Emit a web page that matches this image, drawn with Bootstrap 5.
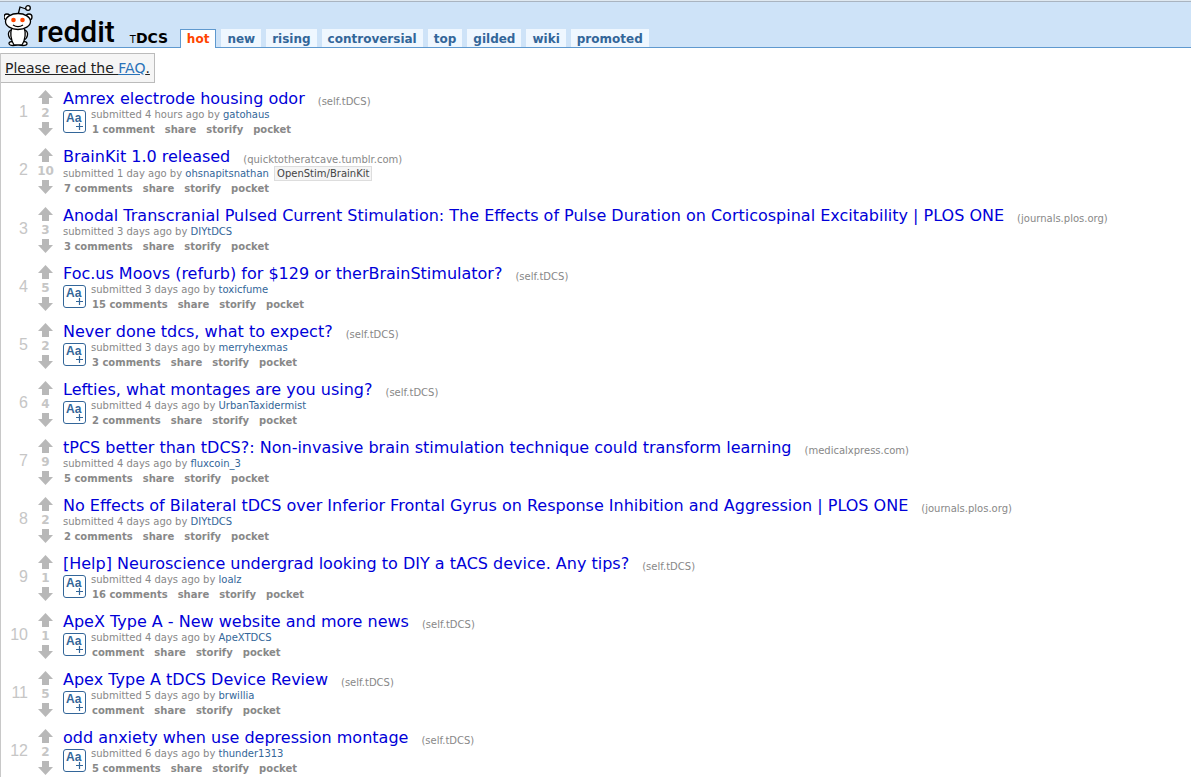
<!DOCTYPE html>
<html lang="en">
<head>
<meta charset="utf-8">
<meta name="viewport" content="width=device-width, initial-scale=1">
<title>tDCS</title>
<link rel="stylesheet" href="https://cdn.jsdelivr.net/npm/bootstrap@5.3.0/dist/css/bootstrap.min.css">
<style>
body{font-family:Verdana,"DejaVu Sans",sans-serif;font-size:10px;line-height:12px;color:#888;background:#fff}
a{text-decoration:none}
a:hover{text-decoration:underline}
.site-header{background:#cee3f8;border-bottom:1px solid #5f99cf;border-top:1px solid #dfe8f0;height:48px;box-shadow:inset 0 1px #a9b4c0}
.brand-logo{color:#000}
.brand-logo:hover{text-decoration:none}
.brand-logo svg{width:32px;height:44px}
.brand-word{font:500 30px/30px Roboto,sans-serif;color:#000;margin-left:1px}
.sub-name{color:#000;font-size:14px;line-height:14px;font-weight:700;margin-left:15px;width:50px;white-space:nowrap}
.sub-name a{color:#000}
.sub-name small{font-size:10px;font-weight:400}
.tab-list{gap:5px;margin-bottom:-1px}
.tab-list .nav-link{font-size:12px;line-height:16px;font-weight:700;color:#369;background:#eff7ff;padding:2px 6px 0;border:0;border-radius:0;margin-bottom:1px}
.tab-list .nav-link.active{color:#ff4500;background:#fff;border:1px solid #5f99cf;border-bottom:0;padding:1px 6px;margin-bottom:0}
.page-body{border-left:1px solid #c8c8c8;margin-top:5px}
.notice{font-size:14px;line-height:20px;background:#f5f5f5;border:1px solid #bbb;border-left:0;padding:4px;height:30px;color:#222;text-decoration:underline}
.notice a{color:#2a72b8;text-decoration:underline}
.thing-list{margin:6px 0 0;padding:0;list-style:none}
.thing{margin-bottom:9px}
.rank{width:27px;padding-top:13px;font:16px/20px "Liberation Sans",Arial,sans-serif;color:#c6c6c6;text-align:right}
.votes{width:35px;padding-top:1px}
.vote-btn{border:0;background:none;padding:0;width:15px;height:14px;line-height:0}
.vote-btn svg{width:15px;height:14px;fill:#b8b8b8}
.score{font-size:12px;line-height:18px;font-weight:700;color:#c6c6c6}
.entry{padding-bottom:1px}
.headline{font-size:16px;line-height:19px}
.headline a{color:#0000d8}
.domain{font-size:10px;line-height:12px;margin:6px 0 0 13px}
.headline .domain a{color:#888}
.expando{border:1px solid #369;border-radius:3px;background:#fff;width:23px;height:23px;padding:0;margin:2px 5px 0 0;flex:none;line-height:0}
.expando svg{width:21px;height:21px}
.tagline{line-height:14px}
.tagline a{color:#369}
.flair{display:inline-block;border:1px solid #ddd;background:#f5f5f5;color:#444;padding:0 2px;line-height:13px;margin-left:2px}
.actions{gap:10px;font-weight:700;line-height:14px;padding:1px 0 0 1px}
.actions a{color:#888}
</style>
</head>
<body>
<header class="site-header d-flex align-items-end">
  <a class="brand-logo d-flex align-items-end ms-1" href="#" aria-label="reddit">
    <svg viewBox="0 0 32 44" fill="#fff" stroke="#000" stroke-width="1.3">
      <path d="M14 12l2-8 6 2" fill="none"/><circle cx="24" cy="5" r="2.300"/>
      <circle cx="3" cy="14" r="3"/><circle cx="25" cy="14" r="3"/>
      <path d="M7 27C3 29 4 35 8 37M21 27c4 2 3 8-1 10"/>
      <ellipse cx="9" cy="40.500" rx="4" ry="2"/><ellipse cx="19" cy="40.500" rx="4" ry="2"/>
      <path d="M8 24c-2 6-1 13 2 18h8c3-5 4-12 2-18z"/>
      <ellipse cx="14" cy="18.500" rx="12.500" ry="8"/>
      <circle cx="9.500" cy="17" r="2.300" fill="#ff4500" stroke="none"/><circle cx="18.500" cy="17" r="2.300" fill="#ff4500" stroke="none"/>
      <path d="M9 22c3 2 7 2 10 0" fill="none"/>
    </svg>
    <span class="brand-word">reddit</span>
  </a>
  <span class="sub-name"><a href="#"><small>T</small>DCS</a></span>
  <nav aria-label="Sort">
    <ul class="nav tab-list align-items-end">
      <li class="nav-item"><a class="nav-link active" href="#">hot</a></li>
      <li class="nav-item"><a class="nav-link" href="#">new</a></li>
      <li class="nav-item"><a class="nav-link" href="#">rising</a></li>
      <li class="nav-item"><a class="nav-link" href="#">controversial</a></li>
      <li class="nav-item"><a class="nav-link" href="#">top</a></li>
      <li class="nav-item"><a class="nav-link" href="#">gilded</a></li>
      <li class="nav-item"><a class="nav-link" href="#">wiki</a></li>
      <li class="nav-item"><a class="nav-link" href="#">promoted</a></li>
    </ul>
  </nav>
</header>
<main class="page-body">
  <div class="d-flex"><div class="notice">Please read the <a href="#">FAQ</a>.</div></div>
  <ol class="thing-list" id="things"></ol>
</main>
<script src="https://cdn.jsdelivr.net/npm/bootstrap@5.3.0/dist/js/bootstrap.bundle.min.js"></script>
<script>
// score, title, domain, age, author, comments label, flair
const posts = [
  [2, 'Amrex electrode housing odor', 'self.tDCS', '4 hours', 'gatohaus', '1 comment'],
  [10, 'BrainKit 1.0 released', 'quicktotheratcave.tumblr.com', '1 day', 'ohsnapitsnathan', '7 comments', 'OpenStim/BrainKit'],
  [3, 'Anodal Transcranial Pulsed Current Stimulation: The Effects of Pulse Duration on Corticospinal Excitability | PLOS ONE', 'journals.plos.org', '3 days', 'DIYtDCS', '3 comments'],
  [5, 'Foc.us Moovs (refurb) for $129 or therBrainStimulator?', 'self.tDCS', '3 days', 'toxicfume', '15 comments'],
  [2, 'Never done tdcs, what to expect?', 'self.tDCS', '3 days', 'merryhexmas', '3 comments'],
  [4, 'Lefties, what montages are you using?', 'self.tDCS', '4 days', 'UrbanTaxidermist', '2 comments'],
  [9, 'tPCS better than tDCS?: Non-invasive brain stimulation technique could transform learning', 'medicalxpress.com', '4 days', 'fluxcoin_3', '5 comments'],
  [2, 'No Effects of Bilateral tDCS over Inferior Frontal Gyrus on Response Inhibition and Aggression | PLOS ONE', 'journals.plos.org', '4 days', 'DIYtDCS', '2 comments'],
  [1, '[Help] Neuroscience undergrad looking to DIY a tACS device. Any tips?', 'self.tDCS', '4 days', 'loalz', '16 comments'],
  [1, 'ApeX Type A - New website and more news', 'self.tDCS', '4 days', 'ApeXTDCS', 'comment'],
  [5, 'Apex Type A tDCS Device Review', 'self.tDCS', '5 days', 'brwillia', 'comment'],
  [2, 'odd anxiety when use depression montage', 'self.tDCS', '6 days', 'thunder1313', '5 comments']
];
const expando = `<button type="button" class="expando" aria-label="Show text"><svg viewBox="0 0 21 21"><text x="2" y="11" font-size="12" font-weight="700" font-family="Liberation Sans, Arial, sans-serif" fill="#369">Aa</text><path d="M12 15.500h7M15.500 12v7" stroke="#369" stroke-width="1.200"/></svg></button>`;
document.getElementById('things').innerHTML = posts.map(([score, title, domain, age, author, comments, flair], i) => `
  <li class="thing d-flex">
    <span class="rank">${i + 1}</span>
    <div class="votes d-flex flex-column align-items-center">
      <button type="button" class="vote-btn" aria-label="Upvote"><svg viewBox="0 0 15 14"><path d="M7.500 0L15 8h-4v6H4V8H0z"/></svg></button>
      <span class="score">${score}</span>
      <button type="button" class="vote-btn" aria-label="Downvote"><svg viewBox="0 0 15 14"><path d="M7.500 14L0 6h4V0h7v6h4z"/></svg></button>
    </div>
    <div class="entry flex-grow-1">
      <div class="headline d-flex align-items-center"><a href="#">${title}</a><span class="domain">(<a href="#">${domain}</a>)</span></div>
      <div class="d-flex align-items-start">
        ${domain === 'self.tDCS' ? expando : ''}
        <div>
          <div class="tagline">submitted ${age} ago by <a href="#">${author}</a>${flair ? ` <span class="flair">${flair}</span>` : ''}</div>
          <div class="actions d-flex"><a href="#">${comments}</a><a href="#">share</a><a href="#">storify</a><a href="#">pocket</a></div>
        </div>
      </div>
    </div>
  </li>`).join('');
</script>
</body>
</html>
